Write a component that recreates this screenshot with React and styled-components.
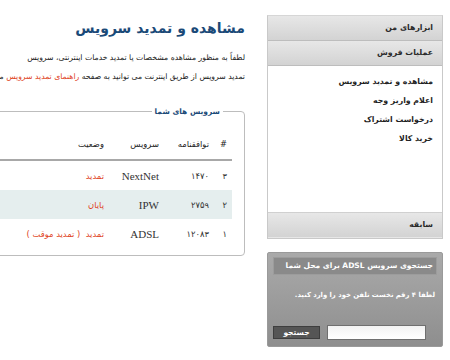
import React from 'react';
import styled, { createGlobalStyle } from 'styled-components';

const GlobalStyle = createGlobalStyle`
  html, body {
    margin: 0;
    padding: 0;
    background: #fff;
    overflow: hidden;
  }
  body {
    direction: rtl;
    font-family: "DejaVu Sans", Tahoma, sans-serif;
    font-size: 8px;
    color: #222;
  }
`;

const Page = styled.div`
  display: flex;
  flex-direction: row;
  align-items: flex-start;
  gap: 22px;
  padding: 15px 7px 0 0;
  width: 700px;
`;

const Sidebar = styled.aside`
  flex: 0 0 176px;
  width: 176px;
  min-width: 0;
  display: flex;
  flex-direction: column;
  gap: 13px;
`;

const MenuBox = styled.div`
  border: 1px solid #c9c9c9;
  border-top-color: #d6d6d6;
  background: #fff;
  display: flex;
  flex-direction: column;
`;

const MenuHeader = styled.div`
  height: 24px;
  line-height: 24px;
  padding: 0 9px;
  font-weight: bold;
  font-size: 7.8px;
  color: #2a2a2a;
  background: linear-gradient(#e7e7e7, #d3d3d3);
  border-bottom: 1px solid ${p => (p.$last ? 'transparent' : '#bdbdbd')};
  border-top: ${p => (p.$last ? '1px solid #d0d0d0' : 'none')};
`;

const MenuLinks = styled.ul`
  list-style: none;
  margin: 0;
  padding: 9px 9px 0 0;
  height: 137px;
  display: flex;
  flex-direction: column;
  gap: 5px;
`;

const MenuLink = styled.li`
  font-size: 7.8px;
  font-weight: bold;
  color: #1f1f1f;
  line-height: 14px;
`;

const SearchBox = styled.div`
  height: 95px;
  padding: 4px 5px 6px;
  box-sizing: border-box;
  border-radius: 2px;
  background: linear-gradient(#aaaaaa, #8e8e8e);
  border: 1px solid #9a9a9a;
  display: flex;
  flex-direction: column;
`;

const SearchTitle = styled.div`
  height: 16px;
  line-height: 16px;
  padding: 0 3px;
  background: #8a8a8a;
  border: 1px solid #9c9c9c;
  color: #fff;
  font-weight: bold;
  font-size: 7.5px;
  white-space: nowrap;
  overflow: hidden;
`;

const SearchHint = styled.div`
  margin-top: 16px;
  padding-right: 2px;
  color: #fff;
  font-weight: bold;
  font-size: 6.8px;
  white-space: nowrap;
`;

const SearchRow = styled.div`
  margin-top: auto;
  display: flex;
  flex-direction: row;
  align-items: center;
  justify-content: space-between;
  padding: 0 11px 0 0;
`;

const SearchInput = styled.input`
  width: 99px;
  height: 15px;
  box-sizing: border-box;
  border: 1px solid #6f6f6f;
  background: linear-gradient(#f2f2f2, #fff);
  padding: 0;
`;

const SearchButton = styled.button`
  width: 47px;
  height: 13px;
  padding: 0;
  border: 1px solid #3e3e3e;
  background: #555;
  color: #fff;
  font-family: inherit;
  font-weight: bold;
  font-size: 7.5px;
  line-height: 11px;
`;

const Main = styled.main`
  flex: 0 0 480px;
  padding-top: 4px;
`;

const Title = styled.h1`
  margin: 0;
  font-size: 14px;
  font-weight: bold;
  color: #1b4a78;
  line-height: 18px;
`;

const Paragraph = styled.p`
  margin: 11px 0 0;
  font-size: 7.7px;
  line-height: 19px;
  white-space: nowrap;
  color: #222;
`;

const Red = styled.span`
  color: #e0431c;
`;

const Fieldset = styled.fieldset`
  margin: 21px 0 0;
  padding: 13px 12px 0 0;
  height: 149px;
  box-sizing: border-box;
  border: 1px solid #bdbdbd;
  border-radius: 4px;
`;

const Legend = styled.legend`
  padding: 0 3px;
  margin-right: 9px;
  font-size: 7.5px;
  font-weight: bold;
  color: #1b4a78;
`;

const Table = styled.table`
  border-collapse: collapse;
  width: 420px;
`;

const Th = styled.th`
  text-align: right;
  font-weight: normal;
  font-size: 8.4px;
  color: #222;
  height: 30px;
  padding: 0 5px 0 0;
  border-bottom: 2px solid #a8a8a8;
  width: ${p => p.$w || 'auto'};
`;

const Tr = styled.tr`
  background: ${p => (p.$alt ? '#e5eeee' : 'transparent')};
`;

const Td = styled.td`
  text-align: right;
  height: 29px;
  padding: 0 5px 0 0;
  color: ${p => (p.$red ? '#e0431c' : '#333')};
  font-family: ${p => (p.$latin ? '"Liberation Serif", serif' : 'inherit')};
  font-size: ${p => (p.$latin ? '11px' : '8.4px')};
`;

const services = [
  { n: '۳', id: '۱۴۷۰', name: 'NextNet', status: 'تمدید' },
  { n: '۲', id: '۲۷۵۹', name: 'IPW', status: 'پایان' },
  { n: '۱', id: '۱۲۰۸۳', name: 'ADSL', status: 'تمدید\u00a0\u00a0( تمدید موقت )' },
];

const App = () => (
  <>
    <GlobalStyle />
    <Page>
      <Sidebar>
        <MenuBox>
          <MenuHeader>ابزارهای من</MenuHeader>
          <MenuHeader>عملیات فروش</MenuHeader>
          <MenuLinks>
            <MenuLink>مشاهده و تمدید سرویس</MenuLink>
            <MenuLink>اعلام واریز وجه</MenuLink>
            <MenuLink>درخواست اشتراک</MenuLink>
            <MenuLink>خرید کالا</MenuLink>
          </MenuLinks>
          <MenuHeader $last>سابقه</MenuHeader>
        </MenuBox>
        <SearchBox>
          <SearchTitle>جستجوی سرویس ADSL برای محل شما</SearchTitle>
          <SearchHint>لطفا ۴ رقم نخست تلفن خود را وارد کنید.</SearchHint>
          <SearchRow>
            <SearchInput />
            <SearchButton>جستجو</SearchButton>
          </SearchRow>
        </SearchBox>
      </Sidebar>
      <Main>
        <Title>مشاهده و تمدید سرویس</Title>
        <Paragraph>
          لطفاً به منظور مشاهده مشخصات یا تمدید خدمات اینترنتی، سرویس
          <br />
          تمدید سرویس از طریق اینترنت می توانید به صفحه <Red>راهنمای تمدید سرویس</Red> مراجعه کنید.
        </Paragraph>
        <Fieldset>
          <Legend>سرویس های شما</Legend>
          <Table>
            <thead>
              <tr>
                <Th $w="13px">#</Th>
                <Th $w="45px">توافقنامه</Th>
                <Th $w="50px">سرویس</Th>
                <Th>وضعیت</Th>
              </tr>
            </thead>
            <tbody>
              {services.map((s, i) => (
                <Tr key={s.id} $alt={i === 1}>
                  <Td>{s.n}</Td>
                  <Td>{s.id}</Td>
                  <Td $latin>{s.name}</Td>
                  <Td $red>{s.status}</Td>
                </Tr>
              ))}
            </tbody>
          </Table>
        </Fieldset>
      </Main>
    </Page>
  </>
);

export default App;
